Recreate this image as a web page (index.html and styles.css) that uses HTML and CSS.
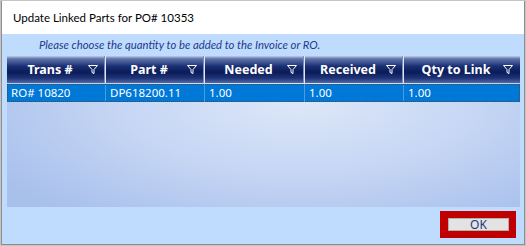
FILE: index.html
```html
<!DOCTYPE html>
<html lang="en">
<head>
<meta charset="UTF-8">
<title>Update Linked Parts</title>
<link rel="stylesheet" href="styles.css">
</head>
<body>
<div class="window">
    <div class="title-bar">Update Linked Parts for PO# 10353</div>
    <div class="client">
        <div class="hint">Please choose the quantity to be added to the Invoice or RO.</div>
        <div class="grid">
            <div class="grid-head">
                <div class="col">Trans #<svg class="filter" viewBox="0 0 10 9"><path d="M0.5 0.5h9L6 4.5v4L4 7.5v-3z"/></svg></div>
                <div class="col">Part #<svg class="filter" viewBox="0 0 10 9"><path d="M0.5 0.5h9L6 4.5v4L4 7.5v-3z"/></svg></div>
                <div class="col">Needed<svg class="filter" viewBox="0 0 10 9"><path d="M0.5 0.5h9L6 4.5v4L4 7.5v-3z"/></svg></div>
                <div class="col">Received<svg class="filter" viewBox="0 0 10 9"><path d="M0.5 0.5h9L6 4.5v4L4 7.5v-3z"/></svg></div>
                <div class="col">Qty to Link<svg class="filter" viewBox="0 0 10 9"><path d="M0.5 0.5h9L6 4.5v4L4 7.5v-3z"/></svg></div>
            </div>
            <div class="grid-row selected">
                <div class="cell">RO# 10820</div>
                <div class="cell">DP618200.11</div>
                <div class="cell">1.00</div>
                <div class="cell">1.00</div>
                <div class="cell">1.00</div>
            </div>
        </div>
        <div class="actions">
            <div class="ok-wrap"><button class="ok">OK</button></div>
        </div>
    </div>
</div>
</body>
</html>
```

FILE: styles.css
```css
body {
    margin: 0;
    font-family: "Noto Sans", "Open Sans", Arial, sans-serif;
}

.window {
    width: 526px;
    height: 246px;
    box-sizing: border-box;
    border: 1px solid #c4c4c4;
    box-shadow: inset 1px 0 0 #8e8e8e, inset -1px 0 0 #8e8e8e, inset 0 -1px 0 #8e8e8e;
    display: flex;
    flex-direction: column;
    background: #fff;
}

.title-bar {
    height: 33px;
    line-height: 33px;
    padding-left: 12px;
    font-family: Lato, "Noto Sans", sans-serif;
    font-size: 11.5px;
    color: #000;
    flex: none;
}

.client {
    flex: 1;
    margin: 0 1px 1px 1px;
    background-color: #bfdcfe;
    padding: 0 4px 0 5px;
    display: flex;
    flex-direction: column;
}

.hint {
    height: 22px;
    line-height: 22px;
    padding-left: 32px;
    font-family: Lato, "Noto Sans", sans-serif;
    font-size: 11.3px;
    font-style: italic;
    color: #1e3a8a;
}

.grid {
    height: 151px;
    background: radial-gradient(ellipse 70% 95% at 57% 30%, #dde7f8 0%, #c6d6f4 50%, #a8c0ec 100%);
}

.grid-head,
.grid-row {
    display: grid;
    grid-template-columns: 99px 99px 100px 99px 1fr;
}

.grid-head {
    height: 27px;
    background: linear-gradient(#c3cce4 0, #6276ad 10%, #1a2f72 38%, #0a1b58 60%, #1f3476 82%, #5468a2 100%);
}

.col {
    position: relative;
    display: flex;
    align-items: center;
    justify-content: center;
    padding-right: 12px;
    color: #fff;
    font-weight: bold;
    font-size: 12.5px;
    border-right: 1px solid #dfe5f3;
    box-shadow: inset -1px 0 0 #7d8dbb;
}

.col:last-child {
    border-right: none;
    box-shadow: none;
}

.filter {
    position: absolute;
    right: 7px;
    top: 9px;
    width: 10px;
    height: 9px;
    fill: none;
    stroke: #fff;
    stroke-width: 1;
}

.grid-row {
    height: 18px;
    margin-top: 1px;
}

.selected {
    background-color: #0078d7;
    outline: 1px dotted #4a4a4a;
    outline-offset: -1px;
}

.cell {
    color: #fff;
    font-size: 11.5px;
    line-height: 18px;
    padding-left: 4px;
    border-right: 1px solid #4a9be0;
}

.cell:last-child {
    border-right: none;
}

.actions {
    flex: 1;
    display: flex;
    justify-content: flex-end;
    align-items: flex-start;
    padding-top: 4px;
    padding-right: 4px;
}

.ok-wrap {
    background-color: #c00000;
    padding: 7px 7px 7px 8px;
}

.ok {
    display: block;
    width: 61px;
    height: 13px;
    padding: 0;
    margin: 0;
    border: 1px solid #b0b0b0;
    background-color: #e3e3e3;
    color: #1d3b7c;
    font-family: "Noto Sans", Arial, sans-serif;
    font-size: 12px;
    line-height: 11px;
}
```
